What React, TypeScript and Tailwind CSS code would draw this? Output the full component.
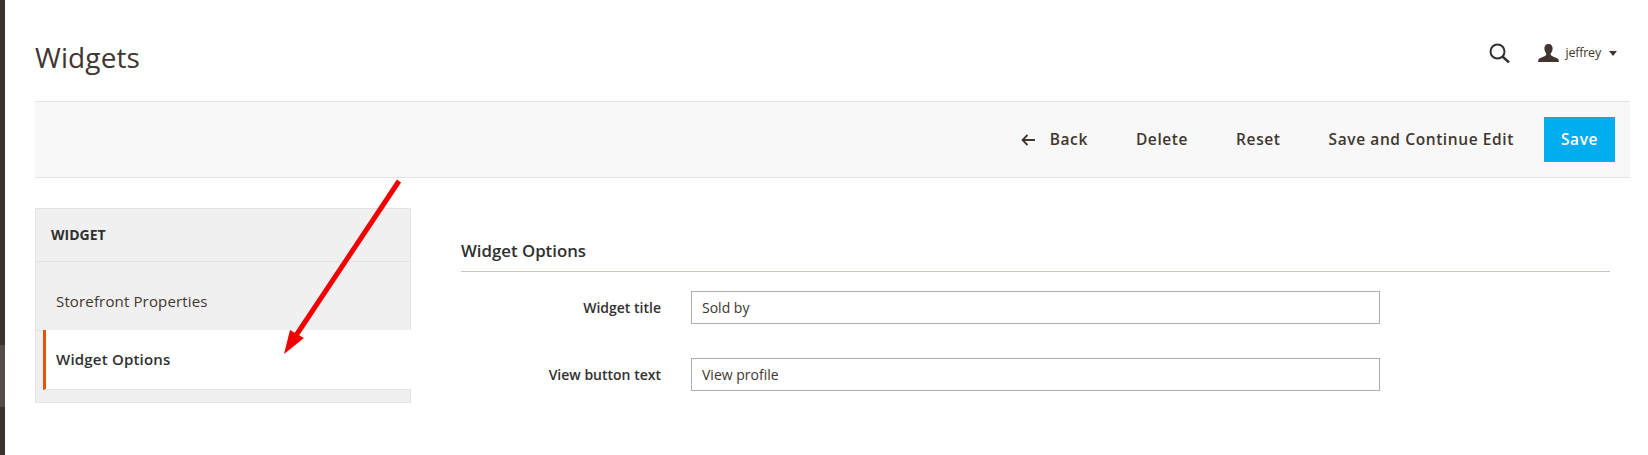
import React from 'react';

const font = "font-['Open_Sans',sans-serif]";

function Field({ label, value }: { label: string; value: string }) {
  return (
    <div className="flex items-center h-[33px]">
      <label className="w-[200px] text-right text-[14px] font-semibold text-[#303030]">{label}</label>
      <div className="ml-[30px] w-[689px] h-[33px] border border-[#adadad] bg-white flex items-center pl-[10px] text-[14px] text-[#41362f]">
        {value}
      </div>
    </div>
  );
}

export default function App() {
  return (
    <div className={`${font} relative flex w-[1648px] h-[455px] overflow-hidden bg-white text-[#41362f]`}>
      <div className="w-[5px] shrink-0 bg-[#373330] flex flex-col">
        <div className="h-[345px]" />
        <div className="h-[62px] bg-[#524d49]" />
      </div>

      <div className="w-[1625px] pl-[30px]">
        <div className="h-[101px] flex items-start justify-between">
          <h1 className="mt-[38px] text-[28px] leading-[38px] font-normal tracking-[0.1px]">Widgets</h1>
          <div className="flex items-center mt-[43px] pr-[13px]">
            <svg width="22" height="20" viewBox="0 0 22 20" fill="none" stroke="#303030">
              <circle cx="8.5" cy="8.5" r="7" strokeWidth="2" />
              <line x1="13.5" y1="13.5" x2="20" y2="19.5" strokeWidth="2.4" />
            </svg>
            <svg className="ml-[27px]" width="21" height="18" viewBox="0 0 21 18" fill="#41362f">
              <path d="M10.5 0C7.6 0 6.2 2.1 6.4 4.8c.1 1.8.8 3.4 1.7 4.5.3.4.3 1.5-.1 2C6.900 12.600 1.500 13.600.5 15.500L0 18h21l-.5-2.500c-1-1.900-6.400-2.900-7.500-4.200-.4-.5-.4-1.600-.1-2 .9-1.100 1.600-2.700 1.700-4.500C14.800 2.100 13.400 0 10.500 0z" />
            </svg>
            <span className="ml-[6px] text-[12.5px] tracking-[-0.2px] text-[#41362f]">jeffrey</span>
            <span className="ml-[8px] w-0 h-0 border-x-[4.5px] border-x-transparent border-t-[5px] border-t-[#41362f]" />
          </div>
        </div>

        <div className="h-[77px] border-y border-[#e3e3e3] bg-[#f8f8f8] flex items-center justify-end pr-[15px] text-[15.5px] font-semibold tracking-[0.6px]">
          <svg className="mr-[15px]" width="14" height="12" viewBox="0 0 14 12" fill="none" stroke="#41362f" strokeWidth="1.8">
            <path d="M14 6H1.500M6.500 1 1.500 6l5 5" />
          </svg>
          <span>Back</span>
          <span className="ml-[48px]">Delete</span>
          <span className="ml-[48px]">Reset</span>
          <span className="ml-[48px]">Save and Continue Edit</span>
          <button className="ml-[30px] w-[71px] h-[45px] bg-[#00adef] text-white">Save</button>
        </div>

        <div className="flex mt-[30px]">
          <div className="w-[376px] h-[195px] border border-[#e3e3e3] bg-[#f0f0f0] flex flex-col">
            <div className="h-[53px] border-b border-[#e3e3e3] flex items-center pl-[15px] pb-[2px] text-[14px] font-bold text-[#303030]">
              WIDGET
            </div>
            <div className="h-[69px] border-b border-[#e3e3e3] flex items-center pl-[20px] pt-[11px] text-[15px] tracking-[0.15px] text-[#41362f]">
              Storefront Properties
            </div>
            <div className="ml-[7px] -mr-px -mt-px h-[60px] border-b border-[#e3e3e3] border-l-[3px] border-l-[#eb5202] bg-white flex items-center pl-[10px] text-[15px] font-semibold tracking-[0.2px] text-[#303030]">
              Widget Options
            </div>
          </div>

          <div className="ml-[50px] w-[1149px] pt-[29px]">
            <div className="h-[35px] border-b border-[#cfc6ba] text-[16.8px] leading-[28px] font-semibold text-[#303030]">
              Widget Options
            </div>
            <div className="mt-[19px] flex flex-col gap-[34px]">
              <Field label="Widget title" value="Sold by" />
              <Field label="View button text" value="View profile" />
            </div>
          </div>
        </div>
      </div>

      <svg className="absolute left-0 top-0 pointer-events-none" width="1648" height="455">
        <line x1="399" y1="181" x2="295" y2="337" stroke="#f00000" strokeWidth="5" />
        <polygon points="284,354 290,330 304,338" fill="#f00000" />
      </svg>
    </div>
  );
}
